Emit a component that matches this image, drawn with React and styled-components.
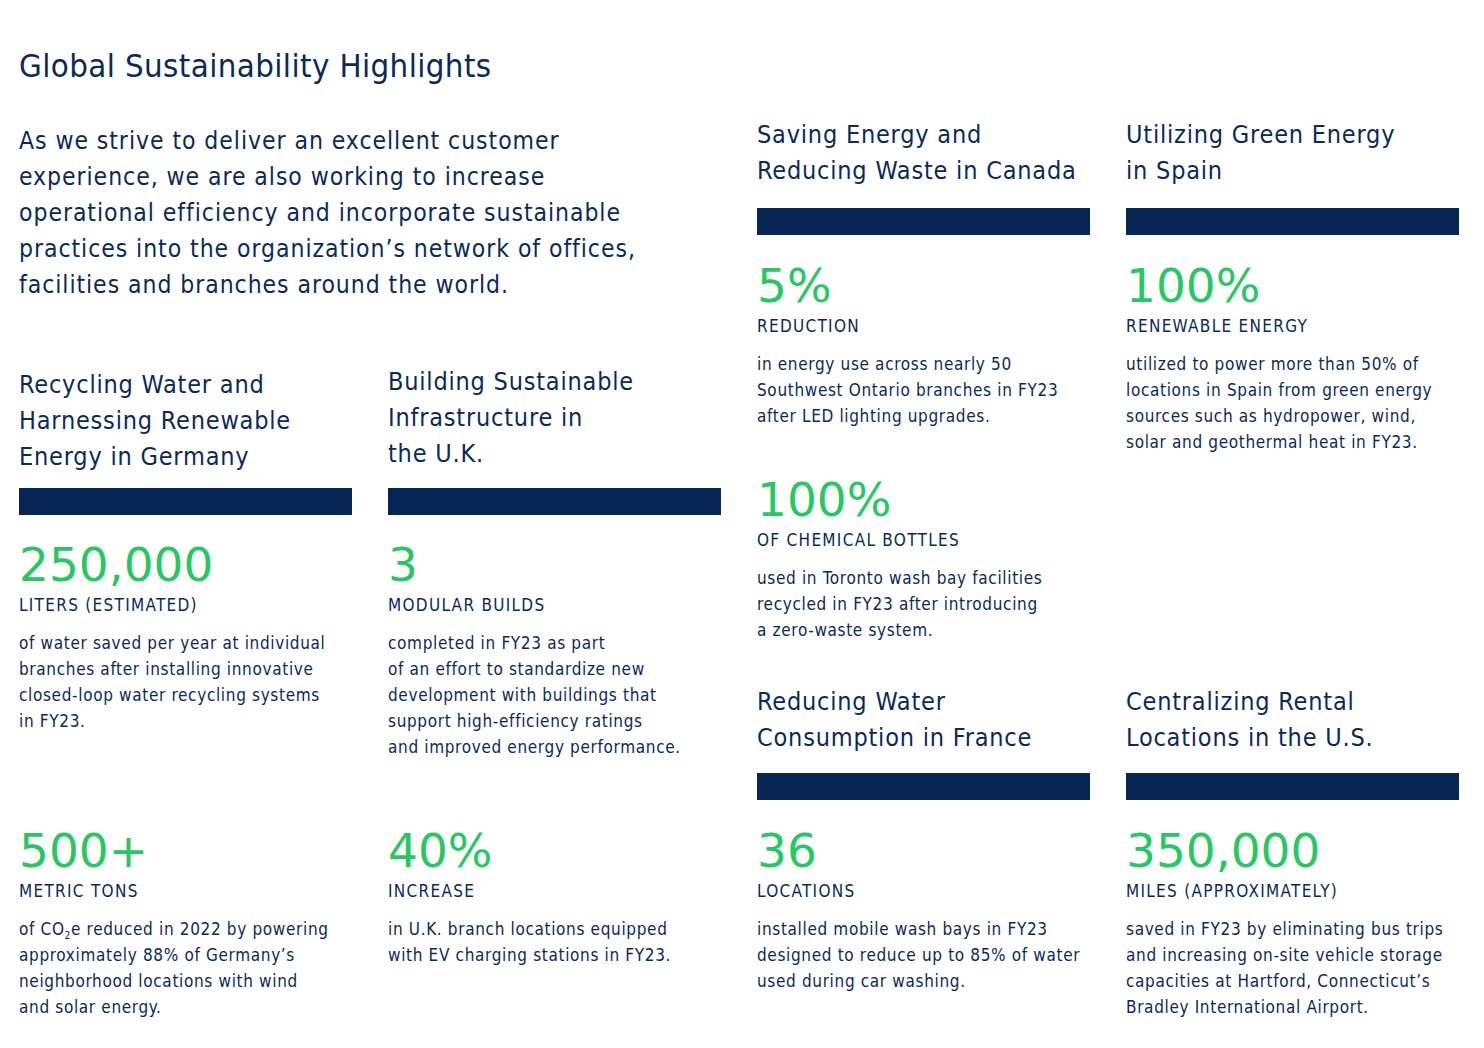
import React from "react";
import styled, { createGlobalStyle } from "styled-components";

const NAVY = "#0a2a5a";
const BAR = "#062756";
const GREEN = "#27c863";

const GlobalStyle = createGlobalStyle`
  html, body { margin: 0; padding: 0; background: #ffffff; }
  body {
    font-family: "DejaVu Sans Condensed", "DejaVu Sans", sans-serif;
    font-stretch: condensed;
    color: ${NAVY};
  }
`;

const Page = styled.div`
  width: 1484px;
  height: 1048px;
  box-sizing: border-box;
  padding: 46px 19px 0 19px;
  overflow: hidden;
`;

const Columns = styled.div`
  display: flex;
  gap: 36px;
  align-items: flex-start;
`;

const Half = styled.div`
  width: 702px;
  display: flex;
  flex-direction: column;
  padding-top: ${(p) => p.$top || 0}px;
`;

const Title = styled.h1`
  margin: 0;
  font-size: 32.7px;
  line-height: 40px;
  font-weight: 400;
  letter-spacing: 0.4px;
  color: ${NAVY};
`;

const Intro = styled.p`
  margin: 37px 0 0 0;
  font-size: 24.5px;
  line-height: 36px;
  letter-spacing: 0.95px;
  white-space: nowrap;
`;

const Grid = styled.div`
  display: grid;
  grid-template-columns: 333px 333px;
  column-gap: 36px;
  margin-top: ${(p) => p.$top || 0}px;
`;

const Heading = styled.h2`
  margin: ${(p) => p.$top || 0}px 0 ${(p) => p.$lift || 0}px 0;
  align-self: end;
  font-size: 25px;
  line-height: 36px;
  font-weight: 400;
  letter-spacing: 0.8px;
  white-space: nowrap;
  color: ${NAVY};
`;

const Bar = styled.div`
  height: 27px;
  background: ${BAR};
  margin-top: ${(p) => p.$top || 0}px;
`;

const Stack = styled.div`
  display: flex;
  flex-direction: column;
  gap: ${(p) => p.$gap || 0}px;
  margin-top: ${(p) => p.$top || 0}px;
`;

const Stat = styled.div`
  display: flex;
  flex-direction: column;
`;

const Number = styled.div`
  font-family: "DejaVu Sans", sans-serif;
  font-stretch: normal;
  font-size: 47px;
  line-height: 50px;
  color: ${GREEN};
`;

const Label = styled.div`
  margin-top: 5px;
  font-size: 17px;
  line-height: 20px;
  letter-spacing: 1.3px;
  text-transform: uppercase;
`;

const Body = styled.p`
  margin: 15px 0 0 0;
  font-size: 17px;
  line-height: 26px;
  letter-spacing: 0.66px;
  white-space: nowrap;

  sub {
    font-size: 10px;
    line-height: 0;
    vertical-align: -4px;
  }
`;

const Lines = ({ lines }) =>
  lines.map((l, i) => (
    <React.Fragment key={i}>
      {l}
      {i < lines.length - 1 && <br />}
    </React.Fragment>
  ));

const StatBlock = ({ value, label, lines }) => (
  <Stat>
    <Number>{value}</Number>
    <Label>{label}</Label>
    <Body>
      <Lines lines={lines} />
    </Body>
  </Stat>
);

export default function App() {
  return (
    <>
      <GlobalStyle />
      <Page>
        <Columns>
          <Half>
            <Title>Global Sustainability Highlights</Title>
            <Intro>
              <Lines
                lines={[
                  "As we strive to deliver an excellent customer",
                  "experience, we are also working to increase",
                  "operational efficiency and incorporate sustainable",
                  "practices into the organization’s network of offices,",
                  "facilities and branches around the world.",
                ]}
              />
            </Intro>
            <Grid $top={61}>
              <Heading>
                <Lines lines={["Recycling Water and", "Harnessing Renewable", "Energy in Germany"]} />
              </Heading>
              <Heading $lift={3}>
                <Lines lines={["Building Sustainable", "Infrastructure in", "the U.K."]} />
              </Heading>
              <Bar $top={13} />
              <Bar $top={13} />
              <Stack $top={25}>
                <StatBlock
                  value="250,000"
                  label="Liters (estimated)"
                  lines={[
                    "of water saved per year at individual",
                    "branches after installing innovative",
                    "closed-loop water recycling systems",
                    "in FY23.",
                  ]}
                />
              </Stack>
              <Stack $top={25}>
                <StatBlock
                  value="3"
                  label="Modular builds"
                  lines={[
                    "completed in FY23 as part",
                    "of an effort to standardize new",
                    "development with buildings that",
                    "support high-efficiency ratings",
                    "and improved energy performance.",
                  ]}
                />
              </Stack>
              <Stack $top={66}>
                <Stat>
                  <Number>500+</Number>
                  <Label>Metric tons</Label>
                  <Body>
                    of CO<sub>2</sub>e reduced in 2022 by powering
                    <br />
                    approximately 88% of Germany’s
                    <br />
                    neighborhood locations with wind
                    <br />
                    and solar energy.
                  </Body>
                </Stat>
              </Stack>
              <Stack $top={66}>
                <StatBlock
                  value="40%"
                  label="Increase"
                  lines={[
                    "in U.K. branch locations equipped",
                    "with EV charging stations in FY23.",
                  ]}
                />
              </Stack>
            </Grid>
          </Half>

          <Half $top={71}>
            <Grid>
              <Heading>
                <Lines lines={["Saving Energy and", "Reducing Waste in Canada"]} />
              </Heading>
              <Heading>
                <Lines lines={["Utilizing Green Energy", "in Spain"]} />
              </Heading>
              <Bar $top={19} />
              <Bar $top={19} />
              <Stack $top={26} $gap={46}>
                <StatBlock
                  value="5%"
                  label="Reduction"
                  lines={[
                    "in energy use across nearly 50",
                    "Southwest Ontario branches in FY23",
                    "after LED lighting upgrades.",
                  ]}
                />
                <StatBlock
                  value="100%"
                  label="of chemical bottles"
                  lines={[
                    "used in Toronto wash bay facilities",
                    "recycled in FY23 after introducing",
                    "a zero-waste system.",
                  ]}
                />
              </Stack>
              <Stack $top={26}>
                <StatBlock
                  value="100%"
                  label="Renewable energy"
                  lines={[
                    "utilized to power more than 50% of",
                    "locations in Spain from green energy",
                    "sources such as hydropower, wind,",
                    "solar and geothermal heat in FY23.",
                  ]}
                />
              </Stack>
              <Heading $top={41}>
                <Lines lines={["Reducing Water", "Consumption in France"]} />
              </Heading>
              <Heading $top={41}>
                <Lines lines={["Centralizing Rental", "Locations in the U.S."]} />
              </Heading>
              <Bar $top={17} />
              <Bar $top={17} />
              <Stack $top={26}>
                <StatBlock
                  value="36"
                  label="Locations"
                  lines={[
                    "installed mobile wash bays in FY23",
                    "designed to reduce up to 85% of water",
                    "used during car washing.",
                  ]}
                />
              </Stack>
              <Stack $top={26}>
                <StatBlock
                  value="350,000"
                  label="Miles (approximately)"
                  lines={[
                    "saved in FY23 by eliminating bus trips",
                    "and increasing on-site vehicle storage",
                    "capacities at Hartford, Connecticut’s",
                    "Bradley International Airport.",
                  ]}
                />
              </Stack>
            </Grid>
          </Half>
        </Columns>
      </Page>
    </>
  );
}
